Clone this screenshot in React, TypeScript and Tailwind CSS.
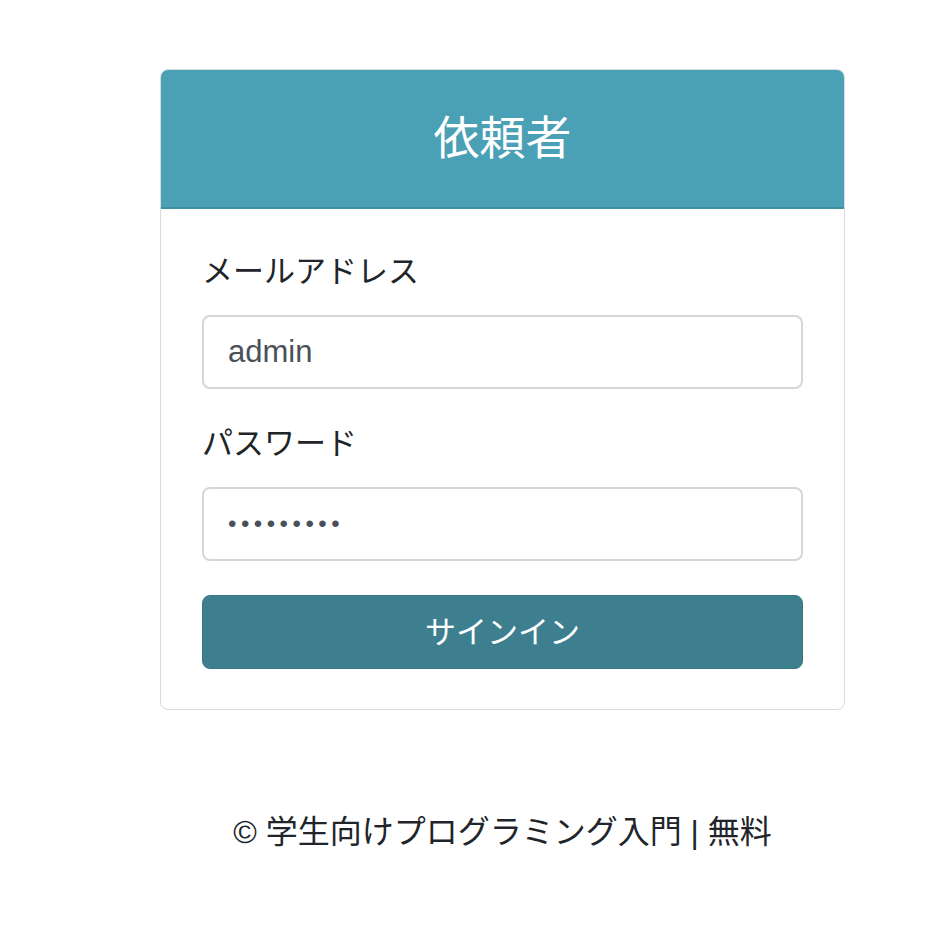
import React from "react";

export default function App() {
  const font = { fontFamily: '"Liberation Sans", "Noto Sans CJK JP", sans-serif' };
  return (
    <div className="min-h-[936px] w-[946px] bg-white text-[#212529]" style={font}>
      <div className="pt-[69px] pl-[160px]">
        <div className="w-[685px] rounded-[8px] border border-[#d9dcdf] bg-white overflow-hidden">
          <div className="h-[139px] bg-[#4aa0b5] border-b-2 border-[#41909f] flex items-center justify-center">
            <h1 className="text-[46px] leading-none text-white font-normal pb-[2px]">依頼者</h1>
          </div>
          <div className="px-[41px] pt-[40px] pb-[40px]">
            <label className="block text-[31px] leading-[46px]">メールアドレス</label>
            <input
              readOnly
              value="admin"
              className="mt-[20px] block w-full h-[74px] rounded-[8px] border-2 border-[#d3d7dc] bg-white px-[24px] text-[31px] text-[#495057] outline-none"
              style={font}
            />
            <label className="mt-[32px] block text-[31px] leading-[46px]">パスワード</label>
            <input
              readOnly
              type="password"
              value="123456789"
              className="mt-[20px] block w-full h-[74px] rounded-[8px] border-2 border-[#d3d7dc] bg-white px-[24px] text-[24px] tracking-[4.5px] text-[#495057] outline-none"
              style={font}
            />
            <button className="mt-[34px] block w-full h-[74px] rounded-[8px] bg-[#3d7f8f] text-white text-[31px] leading-none border border-[#3a7888]">
              サインイン
            </button>
          </div>
        </div>
      </div>
      <div className="pl-[160px] mt-[100px]">
        <div className="w-[685px] text-center text-[32px] leading-[44px] text-[#212529]">
          © 学生向けプログラミング入門 | 無料
        </div>
      </div>
    </div>
  );
}
